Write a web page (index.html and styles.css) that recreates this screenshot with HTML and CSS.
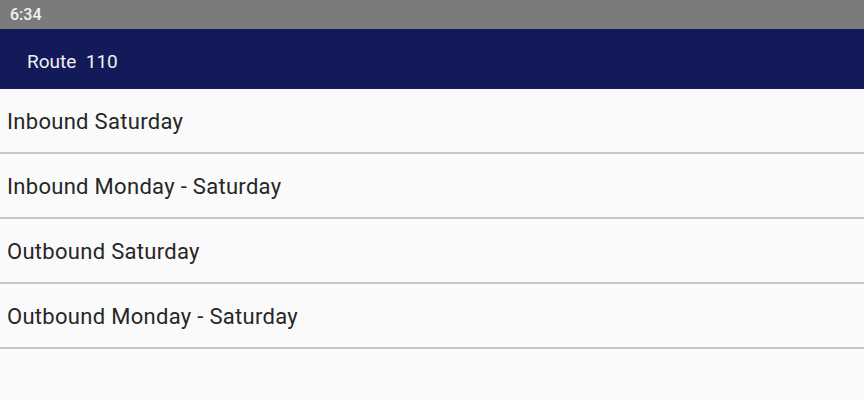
FILE: index.html
```html
<!DOCTYPE html>
<html lang="en">
  <head>
    <meta charset="UTF-8" />
    <meta name="viewport" content="width=device-width, initial-scale=1.0" />
    <title>Route 110</title>
    <link rel="stylesheet" href="styles.css">
  </head>
  <body>
    <div class="status-bar">6:34</div>
    <div class="toolbar">Route&nbsp; 110</div>
    <ul class="schedule-list">
      <li>Inbound Saturday</li>
      <li>Inbound Monday - Saturday</li>
      <li>Outbound Saturday</li>
      <li>Outbound Monday - Saturday</li>
    </ul>
  </body>
</html>
```

FILE: styles.css
```css
body {
  margin: 0;
  font-family: Roboto, "Liberation Sans", sans-serif;
  background: #fafafa;
}
.status-bar {
  height: 29px;
  background: #7b7b7b;
  color: #f2f2f2;
  font-size: 16px;
  font-weight: 500;
  line-height: 29px;
  padding-left: 10px;
}
.toolbar {
  height: 60px;
  background: #131a5a;
  color: #f0f0f0;
  font-size: 19px;
  line-height: 66px;
  padding-left: 27px;
}
.schedule-list {
  list-style: none;
  margin: 0;
  padding: 0;
}
.schedule-list li {
  height: 63px;
  line-height: 66px;
  padding-left: 7px;
  font-size: 22px;
  letter-spacing: 0.3px;
  color: #262626;
  border-bottom: 2px solid #c6c6c6;
}
```
